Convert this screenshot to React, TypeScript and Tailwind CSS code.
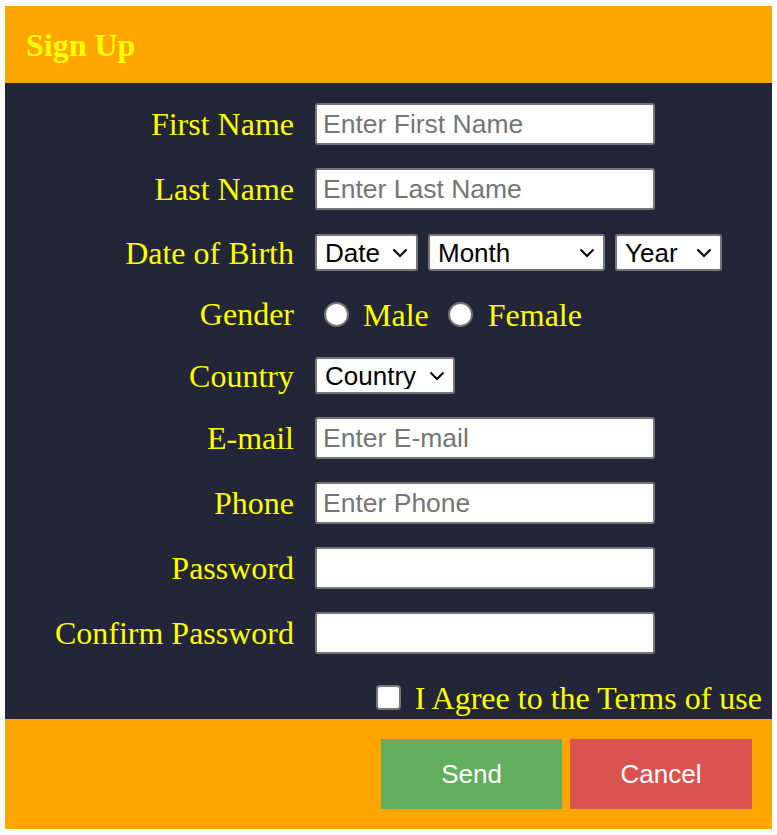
import React from "react";

const serif = "font-['Liberation_Serif','Times_New_Roman',serif]";
const sans = "font-['Liberation_Sans',Arial,sans-serif]";

function Chevron() {
  return (
    <svg
      className="pointer-events-none absolute right-[10px] top-1/2 -translate-y-1/2"
      width="16"
      height="10"
      viewBox="0 0 16 10"
      fill="none"
    >
      <path d="M1.5 1.5 L8 8 L14.5 1.5" stroke="#000" strokeWidth="2" />
    </svg>
  );
}

function Select({ label, width, height }: { label: string; width: string; height: string }) {
  return (
    <div className={`relative ${width} ${height}`}>
      <select
        defaultValue=""
        className={`${sans} h-full w-full appearance-none rounded-[3px] border-2 border-[#767676] bg-white pl-[8px] text-[26px] leading-none text-black outline-none`}
      >
        <option value="">{label}</option>
      </select>
      <Chevron />
    </div>
  );
}

function TextInput({ placeholder, type = "text" }: { placeholder?: string; type?: string }) {
  return (
    <input
      type={type}
      placeholder={placeholder}
      className={`${sans} h-[42px] w-[340px] rounded-[3px] border-2 border-[#767676] bg-white px-[6px] text-[26.5px] text-black outline-none placeholder:text-[#757575]`}
    />
  );
}

function Row({
  label,
  height,
  mt,
  children,
}: {
  label: string;
  height: string;
  mt: string;
  children: React.ReactNode;
}) {
  return (
    <div className={`grid grid-cols-[289px_1fr] items-center gap-x-[21px] ${height} ${mt}`}>
      <label className={`${serif} text-right text-[32px] leading-[36px] whitespace-nowrap text-[#ffff00]`}>
        {label}
      </label>
      <div className="flex items-center">{children}</div>
    </div>
  );
}

export default function App() {
  return (
    <div className="min-h-screen bg-white pt-[6px]">
      <div className="mx-[5px] w-[767px]">
        <div className="flex h-[77px] items-center bg-[#ffa500] pl-[21px]">
          <h1 className={`${serif} text-[32px] font-bold leading-none text-[#ffff00]`}>Sign Up</h1>
        </div>

        <div className="flex flex-col bg-[#232538] pt-[20px] pb-[3px]">
          <Row label="First Name" height="h-[42px]" mt="mt-0">
            <TextInput placeholder="Enter First Name" />
          </Row>
          <Row label="Last Name" height="h-[42px]" mt="mt-[23px]">
            <TextInput placeholder="Enter Last Name" />
          </Row>
          <Row label="Date of Birth" height="h-[37px]" mt="mt-[24px]">
            <div className="flex gap-[10px]">
              <Select label="Date" width="w-[103px]" height="h-[37px]" />
              <Select label="Month" width="w-[177px]" height="h-[37px]" />
              <Select label="Year" width="w-[107px]" height="h-[37px]" />
            </div>
          </Row>
          <Row label="Gender" height="h-[40px]" mt="mt-[23px]">
            <div className={`${serif} flex items-center text-[32px] leading-[36px] text-[#ffff00]`}>
              <input
                type="radio"
                name="gender"
                className="ml-[9px] h-[25px] w-[25px] appearance-none rounded-full border-2 border-[#767676] bg-white"
              />
              <span className="ml-[14px] translate-y-[1px]">Male</span>
              <input
                type="radio"
                name="gender"
                className="ml-[19px] h-[25px] w-[25px] appearance-none rounded-full border-2 border-[#767676] bg-white"
              />
              <span className="ml-[15px] translate-y-[1px]">Female</span>
            </div>
          </Row>
          <Row label="Country" height="h-[37px]" mt="mt-[23px]">
            <Select label="Country" width="w-[140px]" height="h-[37px]" />
          </Row>
          <Row label="E-mail" height="h-[42px]" mt="mt-[23px]">
            <TextInput placeholder="Enter E-mail" />
          </Row>
          <Row label="Phone" height="h-[42px]" mt="mt-[23px]">
            <TextInput placeholder="Enter Phone" />
          </Row>
          <Row label="Password" height="h-[42px]" mt="mt-[23px]">
            <TextInput type="password" />
          </Row>
          <Row label="Confirm Password" height="h-[42px]" mt="mt-[23px]">
            <TextInput type="password" />
          </Row>
          <div className="mt-[26px] flex h-[36px] items-center justify-end pr-[10px]">
            <input
              type="checkbox"
              className="-translate-y-[1px] h-[25px] w-[25px] appearance-none rounded-[4px] border-2 border-[#767676] bg-white"
            />
            <span className={`${serif} ml-[14px] text-[32px] leading-[36px] whitespace-nowrap text-[#ffff00]`}>
              I Agree to the Terms of use
            </span>
          </div>
        </div>

        <div className="flex justify-end gap-[8px] bg-[#ffa500] p-[20px]">
          <button className={`${sans} h-[70px] w-[181px] bg-[#62ae5e] text-[26px] text-white`}>Send</button>
          <button className={`${sans} h-[70px] w-[182px] bg-[#d9534f] text-[26px] text-white`}>Cancel</button>
        </div>
      </div>
    </div>
  );
}
